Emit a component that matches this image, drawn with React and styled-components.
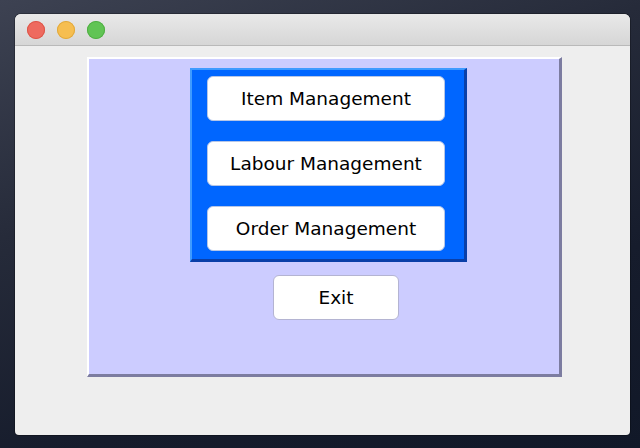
import styled, { createGlobalStyle } from "styled-components";

const GlobalStyle = createGlobalStyle`
  html, body {
    margin: 0;
    padding: 0;
  }
  body {
    width: 640px;
    height: 448px;
    overflow: hidden;
  }
`;

const Desktop = styled.div`
  box-sizing: border-box;
  width: 640px;
  height: 448px;
  padding: 14px 10px 13px 15px;
  background: linear-gradient(160deg, #3d4252 0%, #262b3a 35%, #161c2c 70%, #111828 100%);
`;

const Window = styled.div`
  display: flex;
  flex-direction: column;
  width: 615px;
  height: 421px;
  border-radius: 6px 6px 4px 4px;
  overflow: hidden;
  background: #eeeeee;
  box-shadow: 0 0 0 1px rgba(0, 0, 0, 0.25);
`;

const TitleBar = styled.div`
  box-sizing: border-box;
  height: 32px;
  display: flex;
  align-items: center;
  gap: 12px;
  padding-left: 12px;
  background: linear-gradient(#e9e9e9, #d6d6d6);
  border-bottom: 1px solid #b9b9b9;
`;

const Light = styled.span`
  width: 18px;
  height: 18px;
  border-radius: 50%;
  background: ${(p) => p.$color};
  box-shadow: inset 0 0 0 1px ${(p) => p.$rim};
`;

const Content = styled.div`
  flex: 1;
  padding: 11px 0 0 72px;
`;

const OuterPanel = styled.div`
  box-sizing: border-box;
  width: 475px;
  height: 320px;
  background: #ccccff;
  border-style: solid;
  border-width: 2px 3px 3px 2px;
  border-color: #ffffff #7c7ca0 #7c7ca0 #ffffff;
  padding: 9px 0 0 101px;
  display: flex;
  flex-direction: column;
`;

const MenuPanel = styled.div`
  box-sizing: border-box;
  width: 277px;
  height: 194px;
  background: #0066ff;
  border-style: solid;
  border-width: 2px 3px 3px 2px;
  border-color: #3f9bff #0a3fa8 #0a3fa8 #3f9bff;
  padding: 6px 0 0 15px;
  display: flex;
  flex-direction: column;
  gap: 20px;
`;

const Button = styled.button`
  box-sizing: border-box;
  width: ${(p) => p.$width}px;
  height: 45px;
  margin: 0;
  padding: 0;
  background: #ffffff;
  border: 1px solid ${(p) => p.$edge || "#b6c6e6"};
  border-radius: 6px;
  font-family: "DejaVu Sans", "Liberation Sans", sans-serif;
  font-size: 18.5px;
  color: #000000;
  cursor: pointer;
`;

const ExitButton = styled(Button)`
  margin: 13px 0 0 83px;
`;

const menu = ["Item Management", "Labour Management", "Order Management"];

export default function App() {
  return (
    <>
      <GlobalStyle />
      <Desktop>
        <Window>
          <TitleBar>
            <Light $color="#ee6a5f" $rim="#dc5548" />
            <Light $color="#f6be50" $rim="#e0a83c" />
            <Light $color="#61c454" $rim="#4fae43" />
          </TitleBar>
          <Content>
            <OuterPanel>
              <MenuPanel>
                {menu.map((label) => (
                  <Button key={label} $width={238}>
                    {label}
                  </Button>
                ))}
              </MenuPanel>
              <ExitButton $width={126} $edge="#b4b4d2">
                Exit
              </ExitButton>
            </OuterPanel>
          </Content>
        </Window>
      </Desktop>
    </>
  );
}
